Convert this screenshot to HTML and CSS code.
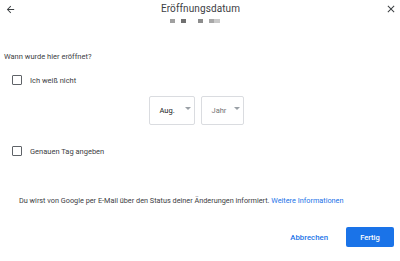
FILE: index.html
```html
<!DOCTYPE html>
<html lang="de">
<head>
    <meta charset="UTF-8">
    <meta name="viewport" content="width=device-width, initial-scale=1.0">
    <title>Eröffnungsdatum</title>
    <link rel="stylesheet" href="styles.css">
</head>
<body>
    <div class="dialog">
        <header class="dialog-header">
            <button class="icon-btn" aria-label="Zurück">
                <svg width="11" height="11" viewBox="0 0 24 24"><path d="M20 11H7.83l5.59-5.59L12 4l-8 8 8 8 1.41-1.41L7.83 13H20v-2z" fill="#3c4043"/></svg>
            </button>
            <div class="header-center">
                <h1>Eröffnungsdatum</h1>
                <div class="steps">
                    <span class="step"></span>
                    <span class="step dark"></span>
                    <span class="step mid"></span>
                    <span class="step light"></span>
                    <span class="step lighter"></span>
                </div>
            </div>
            <button class="icon-btn" aria-label="Schließen">
                <svg width="12" height="12" viewBox="0 0 24 24"><path d="M19 6.41L17.59 5 12 10.59 6.41 5 5 6.41 10.59 12 5 17.59 6.41 19 12 13.41 17.59 19 19 17.59 13.41 12z" fill="#3c4043"/></svg>
            </button>
        </header>

        <p class="question">Wann wurde hier eröffnet?</p>

        <label class="check-row">
            <span class="checkbox"></span>
            <span>Ich weiß nicht</span>
        </label>

        <div class="selects">
            <div class="select">
                <span class="value">Aug.</span>
                <span class="caret"></span>
            </div>
            <div class="select">
                <span class="value placeholder">Jahr</span>
                <span class="caret"></span>
            </div>
        </div>

        <label class="check-row">
            <span class="checkbox"></span>
            <span>Genauen Tag angeben</span>
        </label>

        <p class="note">Du wirst von Google per E-Mail über den Status deiner Änderungen informiert. <a href="#">Weitere Informationen</a></p>

        <div class="actions">
            <button class="btn btn-text">Abbrechen</button>
            <button class="btn btn-primary">Fertig</button>
        </div>
    </div>
</body>
</html>
```

FILE: styles.css
```css
:root {
    --blue: #1a73e8;
    --text: #3c4043;
    --border: #dadce0;
}

* {
    margin: 0;
    padding: 0;
    box-sizing: border-box;
}

body {
    font-family: Roboto, 'Noto Sans', sans-serif;
    color: var(--text);
    background: #fff;
    width: 400px;
    height: 261px;
    overflow: hidden;
}

.dialog {
    padding: 0 4px;
}

.dialog-header {
    display: flex;
    align-items: flex-start;
    justify-content: space-between;
    height: 30px;
}

.icon-btn {
    background: none;
    border: none;
    width: 16px;
    height: 16px;
    display: flex;
    align-items: center;
    justify-content: center;
    margin-top: 1px;
}

.icon-btn:first-child {
    margin-left: -2px;
}

.icon-btn:last-child {
    margin-right: -3px;
}

.header-center {
    display: flex;
    flex-direction: column;
    align-items: center;
    padding-top: 2px;
}

h1 {
    font-size: 10px;
    font-weight: 400;
    line-height: 14px;
    color: var(--text);
    letter-spacing: 0.1px;
}

.steps {
    display: flex;
    margin: 3px 10px 0 0;
}

.step {
    width: 5px;
    height: 4px;
    background: #a0a0a0;
}

.step.dark {
    background: #707070;
    margin-left: 6px;
}

.step.mid {
    background: #8c8c8c;
    margin-left: 12px;
}

.step.light {
    background: #a8a8a8;
    margin-left: 6px;
}

.step.lighter {
    width: 6px;
    background: #cacaca;
}

.question {
    font-size: 7.5px;
    margin-top: 22px;
    line-height: 10px;
}

.check-row {
    display: flex;
    align-items: center;
    gap: 8px;
    font-size: 7.5px;
    margin-left: 8px;
    height: 12px;
}

.question + .check-row {
    margin-top: 12px;
}

.checkbox {
    width: 10px;
    height: 10px;
    border: 1.3px solid #5f6368;
    border-radius: 1px;
}

.selects {
    display: flex;
    justify-content: center;
    gap: 6px;
    margin: 10px 0 0 -8px;
    height: 29px;
}

.select {
    display: flex;
    align-items: center;
    border: 1px solid var(--border);
    border-radius: 2px;
    padding: 0 3px 0 10px;
    font-size: 7.5px;
    color: #202124;
    width: 46px;
    justify-content: space-between;
}

.select + .select {
    width: 43px;
}

.placeholder {
    color: #757575;
}

.caret {
    width: 0;
    height: 0;
    border-left: 3px solid transparent;
    border-right: 3px solid transparent;
    border-top: 3px solid #9aa0a6;
    margin-top: -4px;
}

.selects + .check-row {
    margin-top: 20px;
}

.note {
    font-size: 7.3px;
    line-height: 9px;
    margin: 39px 0 0 15px;
    color: #3c4043;
}

.note a {
    color: var(--blue);
    text-decoration: none;
}

.actions {
    display: flex;
    justify-content: flex-end;
    align-items: center;
    gap: 18px;
    margin-top: 22px;
    padding-right: 2px;
}

.btn {
    font-family: inherit;
    font-size: 7.5px;
    font-weight: 500;
    border: none;
    cursor: pointer;
}

.btn-text {
    background: none;
    color: var(--blue);
    font-size: 7.8px;
}

.btn-primary {
    background: var(--blue);
    color: #fff;
    border-radius: 2px;
    width: 48px;
    height: 20px;
}
```
